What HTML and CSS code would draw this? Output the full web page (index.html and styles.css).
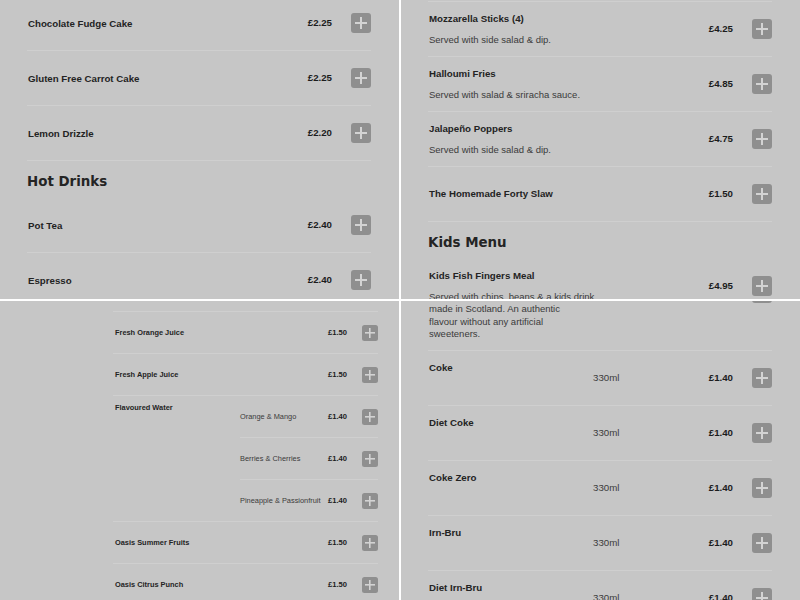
FILE: index.html
```html
<!DOCTYPE html>
<html lang="en">
<head>
<meta charset="utf-8">
<title>Menu</title>
<link rel="stylesheet" href="styles.css">
</head>
<body>
<main class="quad">
  <section class="panel p1">
    <div class="list list-tl">
      <div class="row single"><span class="name">Chocolate Fudge Cake</span><span class="price">£2.25</span><span class="add"></span></div>
      <div class="row single"><span class="name">Gluten Free Carrot Cake</span><span class="price">£2.25</span><span class="add"></span></div>
      <div class="row single"><span class="name">Lemon Drizzle</span><span class="price">£2.20</span><span class="add"></span></div>
      <h2 class="heading">Hot Drinks</h2>
      <div class="row single"><span class="name">Pot Tea</span><span class="price">£2.40</span><span class="add"></span></div>
      <div class="row single"><span class="name">Espresso</span><span class="price">£2.40</span><span class="add"></span></div>
    </div>
  </section>

  <section class="panel p2">
    <div class="list list-tr">
      <div class="row double"><div class="info"><div class="title">Mozzarella Sticks (4)</div><div class="desc">Served with side salad &amp; dip.</div></div><span class="price">£4.25</span><span class="add"></span></div>
      <div class="row double"><div class="info"><div class="title">Halloumi Fries</div><div class="desc">Served with salad &amp; sriracha sauce.</div></div><span class="price">£4.85</span><span class="add"></span></div>
      <div class="row double"><div class="info"><div class="title">Jalapeño Poppers</div><div class="desc">Served with side salad &amp; dip.</div></div><span class="price">£4.75</span><span class="add"></span></div>
      <div class="row single"><span class="name">The Homemade Forty Slaw</span><span class="price">£1.50</span><span class="add"></span></div>
      <h2 class="heading">Kids Menu</h2>
      <div class="row double"><div class="info"><div class="title">Kids Fish Fingers Meal</div><div class="desc">Served with chips, beans &amp; a kids drink.</div></div><span class="price">£4.95</span><span class="add"></span></div>
    </div>
  </section>

  <section class="panel p3">
    <div class="list list-bl">
      <div class="srow"><span class="name">Fresh Orange Juice</span><span class="price">£1.50</span><span class="add small"></span></div>
      <div class="srow"><span class="name">Fresh Apple Juice</span><span class="price">£1.50</span><span class="add small"></span></div>
      <div class="group">
        <div class="gtitle">Flavoured Water</div>
        <div class="variants">
          <div class="vrow"><span class="vname">Orange &amp; Mango</span><span class="price">£1.40</span><span class="add small"></span></div>
          <div class="vrow"><span class="vname">Berries &amp; Cherries</span><span class="price">£1.40</span><span class="add small"></span></div>
          <div class="vrow"><span class="vname">Pineapple &amp; Passionfruit</span><span class="price">£1.40</span><span class="add small"></span></div>
        </div>
      </div>
      <div class="srow"><span class="name">Oasis Summer Fruits</span><span class="price">£1.50</span><span class="add small"></span></div>
      <div class="srow"><span class="name">Oasis Citrus Punch</span><span class="price">£1.50</span><span class="add small"></span></div>
    </div>
  </section>

  <section class="panel p4">
    <div class="list list-br">
      <div class="row cut"><div class="desc lines">made in Scotland. An authentic<br>flavour without any artificial<br>sweeteners.</div><span class="add up"></span></div>
      <div class="row double"><div class="info fixed"><div class="title">Coke</div></div><span class="size">330ml</span><span class="price">£1.40</span><span class="add"></span></div>
      <div class="row double"><div class="info fixed"><div class="title">Diet Coke</div></div><span class="size">330ml</span><span class="price">£1.40</span><span class="add"></span></div>
      <div class="row double"><div class="info fixed"><div class="title">Coke Zero</div></div><span class="size">330ml</span><span class="price">£1.40</span><span class="add"></span></div>
      <div class="row double"><div class="info fixed"><div class="title">Irn-Bru</div></div><span class="size">330ml</span><span class="price">£1.40</span><span class="add"></span></div>
      <div class="row double"><div class="info fixed"><div class="title">Diet Irn-Bru</div></div><span class="size">330ml</span><span class="price">£1.40</span><span class="add"></span></div>
    </div>
  </section>
</main>
</body>
</html>
```

FILE: styles.css
```css
* { box-sizing: border-box; }

html, body {
  margin: 0;
  padding: 0;
  background: #ffffff;
}

body {
  font-family: "Liberation Sans", Arial, sans-serif;
  color: #222222;
}

.quad {
  display: grid;
  grid-template-columns: 399px 399px;
  grid-template-rows: 299px 299px;
  gap: 2px;
  width: 800px;
  height: 600px;
}

.panel {
  background: #c6c6c6;
  overflow: hidden;
  padding: 0 28px 0 27px;
}

.list-tl { margin-top: -4px; }

.list-tr {
  margin-top: 1px;
  border-top: 1px solid #cfcfcf;
}

.row {
  display: flex;
  border-bottom: 1px solid #cfcfcf;
}

.row.single {
  align-items: center;
  height: 55px;
}

.row.double {
  align-items: flex-start;
  padding: 10px 0 9px;
  height: 55px;
}

.name,
.title {
  flex: 1;
  font-size: 9.7px;
  font-weight: 700;
  color: #232323;
  line-height: 14px;
  padding-left: 1px;
}

.p1 .name { padding-top: 2px; }

.info { flex: 1; }
.info.fixed { flex: 0 0 165px; }

.desc {
  margin-top: 7px;
  font-size: 9.5px;
  line-height: 14px;
  color: #3b3b3b;
  padding-left: 1px;
  white-space: nowrap;
}

.price {
  font-size: 9.7px;
  font-weight: 700;
  color: #1c1c1c;
  line-height: 20px;
  margin-right: 19px;
}

.row.double .price,
.row.double .add { margin-top: 7px; }

.size {
  flex: 1;
  font-size: 9.7px;
  line-height: 20px;
  color: #3b3b3b;
  margin-top: 7px;
}

.add {
  flex: 0 0 auto;
  width: 20px;
  height: 20px;
  border-radius: 3px;
  background:
    linear-gradient(#d3d3d3, #d3d3d3) center / 12px 2px no-repeat,
    linear-gradient(#d3d3d3, #d3d3d3) center / 2px 12px no-repeat,
    #8f8f8f;
}

.heading {
  margin: 0;
  padding: 12px 0 7px;
  font-family: "DejaVu Sans", sans-serif;
  font-weight: 700;
  font-size: 13.4px;
  line-height: 18px;
  color: #242424;
}

/* bottom-right */
.row.cut {
  justify-content: space-between;
  align-items: flex-start;
  padding: 2px 0 9.5px;
}

.desc.lines {
  margin-top: 0;
  line-height: 12.5px;
}

.add.up { margin-top: -20px; }

/* bottom-left (smaller scale) */
.panel.p3 { padding: 0 21px 0 113px; }

.list-bl {
  margin-top: 10px;
  border-top: 1px solid #cfcfcf;
}

.srow,
.vrow {
  display: flex;
  align-items: center;
  height: 42px;
  border-bottom: 1px solid #cfcfcf;
}

.vrow:last-child {
  border-bottom: 0;
  height: 41px;
}

.p3 .name,
.gtitle {
  flex: 1;
  font-size: 7.4px;
  font-weight: 700;
  line-height: 10px;
  color: #242424;
  padding-left: 2px;
  padding-top: 1px;
}

.group {
  display: flex;
  border-bottom: 1px solid #cfcfcf;
}

.gtitle {
  flex: 0 0 127px;
  padding-top: 7px;
}

.variants { flex: 1; }

.vname {
  flex: 1;
  font-size: 7.4px;
  line-height: 10px;
  color: #3a3a3a;
  padding-top: 1px;
}

.p3 .price {
  font-size: 7.6px;
  line-height: 16px;
  margin-right: 15px;
}

.add.small {
  width: 16px;
  height: 16px;
  border-radius: 2.5px;
  background:
    linear-gradient(#d3d3d3, #d3d3d3) center / 10px 1.6px no-repeat,
    linear-gradient(#d3d3d3, #d3d3d3) center / 1.6px 10px no-repeat,
    #8f8f8f;
}
```
